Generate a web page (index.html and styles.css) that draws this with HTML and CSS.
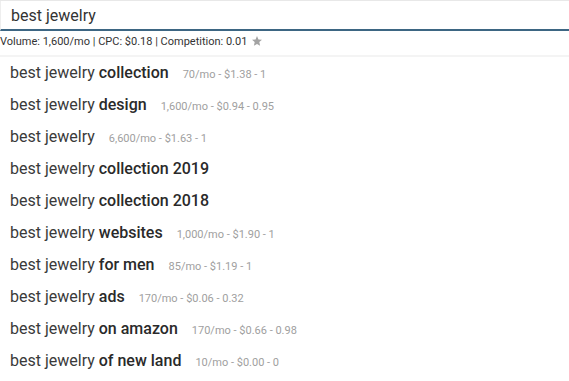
FILE: index.html
```html
<!DOCTYPE html>
<html lang="en">
<head>
    <meta charset="utf-8">
    <title>best jewelry</title>
    <link rel="stylesheet" href="styles.css">
</head>
<body>
    <div class="search">
        <input type="text" class="search-input" value="best jewelry">
    </div>
    <div class="stats">
        Volume: 1,600/mo | CPC: $0.18 | Competition: 0.01
        <svg class="star" width="12" height="12" viewBox="0 0 24 24"><path d="M12 2l2.9 6.9 7.1.6-5.4 4.7 1.6 7.3L12 17.8 5.8 21.5l1.6-7.3L2 9.5l7.1-.6z" fill="#a3a3a3"/></svg>
    </div>
    <ul class="suggestions">
        <li>best jewelry <b>collection</b><span class="meta">70/mo - $1.38 - 1</span></li>
        <li>best jewelry <b>design</b><span class="meta">1,600/mo - $0.94 - 0.95</span></li>
        <li>best jewelry<span class="meta">6,600/mo - $1.63 - 1</span></li>
        <li>best jewelry <b>collection 2019</b></li>
        <li>best jewelry <b>collection 2018</b></li>
        <li>best jewelry <b>websites</b><span class="meta">1,000/mo - $1.90 - 1</span></li>
        <li>best jewelry <b>for men</b><span class="meta">85/mo - $1.19 - 1</span></li>
        <li>best jewelry <b>ads</b><span class="meta">170/mo - $0.06 - 0.32</span></li>
        <li>best jewelry <b>on amazon</b><span class="meta">170/mo - $0.66 - 0.98</span></li>
        <li>best jewelry <b>of new land</b><span class="meta">10/mo - $0.00 - 0</span></li>
    </ul>
</body>
</html>
```

FILE: styles.css
```css
body {
    margin: 0;
    font-family: Roboto, "Liberation Sans", sans-serif;
    color: #333;
    background: #fff;
}
.search {
    border-top: 1px solid #e8e8e8;
}
.search-input {
    display: block;
    box-sizing: border-box;
    width: 100%;
    height: 30px;
    margin: 0;
    padding: 0 10px;
    border: none;
    border-left: 1px solid #eee;
    border-bottom: 2px solid #3d6683;
    font-family: inherit;
    font-size: 16px;
    color: #333;
    outline: none;
}
.stats {
    display: flex;
    align-items: center;
    gap: 3px;
    height: 20px;
    padding-bottom: 4px;
    font-size: 11px;
    color: #333;
    border-bottom: 2px solid #f4f4f4;
}
.star {
    margin-left: 1px;
}
.suggestions {
    list-style: none;
    margin: 0;
    padding: 0;
}
.suggestions li {
    height: 32px;
    line-height: 32px;
    padding-left: 10px;
    font-size: 16px;
    color: #3a3a3a;
}
.suggestions b {
    font-weight: 500;
    color: #2a2a2a;
}
.meta {
    margin-left: 14px;
    font-size: 11px;
    color: #a0a0a0;
}
```
